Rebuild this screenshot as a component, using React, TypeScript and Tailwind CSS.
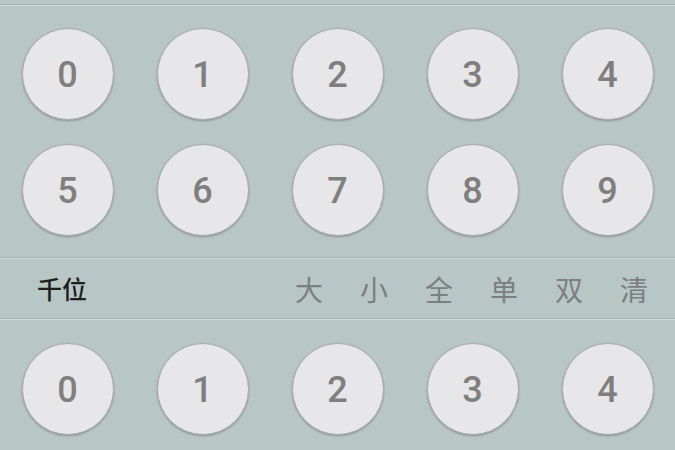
import React from "react";

const Ball = ({ n }: { n: number }) => (
  <div className="flex items-center justify-center">
    <div
      className="w-[92px] h-[92px] rounded-full bg-[#e7e6e8] border border-[#a9abab] shadow-[0_1px_2px_rgba(0,0,0,0.25)] flex items-center justify-center text-[36px] font-medium text-[#7f7f7f] leading-none pt-[2px]"
      style={{ fontFamily: 'Roboto, "Liberation Sans", Arial, sans-serif' }}
    >
      {n}
    </div>
  </div>
);

const Divider = () => (
  <div className="flex flex-col">
    <div className="h-px bg-[#a5b2b2]" />
    <div className="h-px bg-[#d3dcdc]" />
  </div>
);

export default function App() {
  const cjk = { fontFamily: '"Noto Sans CJK SC", "Noto Sans", sans-serif' };
  return (
    <div className="w-[675px] h-[450px] overflow-hidden bg-[#b8c6c6] flex flex-col">
      <div className="h-[4px]" />
      <Divider />
      <div className="pt-[22px] pb-[21px] flex flex-col gap-[24px]">
        <div className="grid grid-cols-5">
          {[0, 1, 2, 3, 4].map((n) => (
            <Ball key={n} n={n} />
          ))}
        </div>
        <div className="grid grid-cols-5">
          {[5, 6, 7, 8, 9].map((n) => (
            <Ball key={n} n={n} />
          ))}
        </div>
      </div>
      <Divider />
      <div className="h-[59px] flex items-center justify-between pl-[37px] pr-[27px]" style={cjk}>
        <span className="text-[25px] font-medium text-[#1e1e1e] leading-none">千位</span>
        <div className="flex gap-[37px] text-[28px] text-[#7b7f7f] leading-none">
          {["大", "小", "全", "单", "双", "清"].map((c) => (
            <span key={c}>{c}</span>
          ))}
        </div>
      </div>
      <Divider />
      <div className="pt-[23px] grid grid-cols-5">
        {[0, 1, 2, 3, 4].map((n) => (
          <Ball key={n} n={n} />
        ))}
      </div>
    </div>
  );
}
